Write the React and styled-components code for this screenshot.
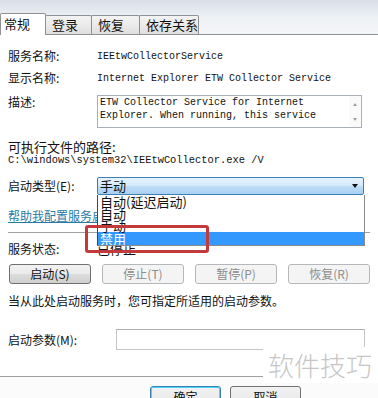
import React from "react";
import styled, { createGlobalStyle } from "styled-components";

const Global = createGlobalStyle`
  html, body { margin: 0; padding: 0; background: #fff; }
  body { font-family: "Noto Sans CJK SC", "Noto Sans", sans-serif; color: #111; }
`;

const Frame = styled.div`
  position: relative;
  width: 378px;
  height: 398px;
  overflow: hidden;
  background: #fff;
  display: flex;
  flex-direction: column;
  font-family: "Noto Sans CJK SC", "Noto Sans", sans-serif;
`;

const Header = styled.div`
  height: 34px;
  display: flex;
  flex-direction: column;
  justify-content: flex-end;
  background: linear-gradient(#d8dfe7 0%, #e4e9ef 30%, #eef1f4 50%, #f4f5f7 100%);
  border-bottom: 1px solid #8e9297;
`;

const TabBar = styled.div`
  display: flex;
  align-items: flex-end;
  height: 22px;
`;

const Tab = styled.div`
  box-sizing: border-box;
  width: ${(p) => p.$w}px;
  height: ${(p) => (p.$active ? 22 : 19)}px;
  margin-bottom: ${(p) => (p.$active ? -1 : 0)}px;
  margin-left: -1px;
  padding-left: ${(p) => (p.$active ? 3 : 6)}px;
  border: 1px solid #8e9297;
  border-bottom: none;
  border-radius: 2px 2px 0 0;
  background: ${(p) =>
    p.$active ? "#fff" : "linear-gradient(#f3f3f3 0%, #ebebeb 50%, #dedede 100%)"};
  font-size: 13px;
  line-height: ${(p) => (p.$active ? 19 : 17)}px;
  color: #111;
  white-space: nowrap;
  position: relative;
  z-index: ${(p) => (p.$active ? 1 : 0)};
`;

const Panel = styled.div`
  padding: 0 8px;
  display: flex;
  flex-direction: column;
`;

const Row = styled.div`
  display: flex;
  align-items: ${(p) => p.$align || "center"};
  height: ${(p) => p.$h}px;
  margin-top: ${(p) => p.$mt}px;
  position: relative;
`;

const Label = styled.div`
  width: ${(p) => p.$w || 89}px;
  flex-shrink: 0;
  font-size: ${(p) => p.$fs || 12}px;
  line-height: ${(p) => p.$lh || 14}px;
  color: #111;
  white-space: nowrap;
`;

const Mono = styled.div`
  font-family: "Liberation Mono", "DejaVu Sans Mono", monospace;
  font-size: ${(p) => p.$fs || 10}px;
  line-height: ${(p) => p.$lh || 13}px;
  color: #111;
  white-space: nowrap;
`;

const DescBox = styled.div`
  box-sizing: border-box;
  width: 265px;
  height: 33px;
  border: 1px solid #a9afb6;
  display: flex;
  background: #fff;
`;

const DescText = styled.div`
  flex: 1;
  padding: 0 2px;
  font-family: "Liberation Mono", "DejaVu Sans Mono", monospace;
  font-size: 10px;
  line-height: 13px;
  color: #111;
  white-space: nowrap;
  overflow: hidden;
`;

const ScrollCol = styled.div`
  width: 12px;
  display: flex;
  flex-direction: column;
  justify-content: space-between;
  align-items: center;
  padding: 7px 0 6px;
  background: #fafafa;
`;

const Arrow = styled.div`
  width: 0;
  height: 0;
  border-left: 2.5px solid transparent;
  border-right: 2.5px solid transparent;
  ${(p) =>
    p.$down
      ? "border-top: 3px solid #a0a0a0;"
      : "border-bottom: 3px solid #a0a0a0;"}
`;

const ComboWrap = styled.div`
  position: relative;
  width: 267px;
  height: 18px;
`;

const Combo = styled.div`
  box-sizing: border-box;
  height: 18px;
  border: 1px solid #3c7fb1;
  border-radius: 2px;
  background: linear-gradient(#e8f3fc 0%, #d6eafb 45%, #bcdcf7 55%, #a9d0f3 100%);
  display: flex;
  align-items: center;
  justify-content: space-between;
  padding: 0 5px 0 2px;
  font-size: 13px;
  line-height: 16px;
  color: #111;
`;

const DropTri = styled.div`
  width: 0;
  height: 0;
  border-left: 3.5px solid transparent;
  border-right: 3.5px solid transparent;
  border-top: 4px solid #111;
`;

const DropList = styled.div`
  position: absolute;
  top: 18px;
  left: 0;
  box-sizing: border-box;
  width: 268px;
  height: 51px;
  background: #fff;
  border: 1px solid #8a8a8a;
  border-top: none;
  border-left-color: #444;
  padding-top: 1px;
  z-index: 5;
  overflow: hidden;
`;

const Item = styled.div`
  font-size: 13px;
  line-height: ${(p) => (p.$sel ? 13 : 12)}px;
  height: ${(p) => (p.$sel ? 13 : 12)}px;
  padding-left: 2px;
  color: ${(p) => (p.$sel ? "#fff" : "#111")};
  background: ${(p) => (p.$sel ? "#3399ff" : "transparent")};
  white-space: nowrap;
`;

const Link = styled.a`
  font-size: 12px;
  line-height: 14px;
  color: #2a7aa5;
  text-decoration: underline;
  white-space: nowrap;
`;

const Sep = styled.div`
  height: 1px;
  margin-top: ${(p) => p.$mt}px;
  background: #a0a0a0;
`;

const Value = styled.div`
  font-size: 13px;
  line-height: 14px;
  color: #111;
`;

const BtnRow = styled.div`
  display: flex;
  justify-content: space-between;
  height: 20px;
  margin-top: ${(p) => p.$mt}px;
  padding-left: 1px;
`;

const Button = styled.div`
  box-sizing: border-box;
  width: 82px;
  height: 20px;
  border: 1px solid ${(p) => (p.$disabled ? "#b5b8bb" : "#707070")};
  border-radius: 3px;
  background: ${(p) =>
    p.$disabled
      ? "#f4f4f4"
      : "linear-gradient(#f2f2f2 0%, #ebebeb 50%, #dddddd 51%, #cfcfcf 100%)"};
  color: ${(p) => (p.$disabled ? "#8c8c8c" : "#111")};
  font-size: 12px;
  line-height: 18px;
  text-align: center;
  white-space: nowrap;
`;

const Info = styled.div`
  margin-top: ${(p) => p.$mt}px;
  font-size: 12px;
  line-height: 14px;
  height: 14px;
  color: #111;
  white-space: nowrap;
`;

const Input = styled.div`
  box-sizing: border-box;
  width: 249px;
  height: 21px;
  border: 1px solid #c2c6cb;
  border-top-color: #abadb3;
  background: #fff;
`;

const Footer = styled.div`
  margin-top: auto;
  height: 21px;
  border-top: 1px solid #a0a0a0;
  display: flex;
  gap: 9px;
  padding: 9px 0 0 150px;
  box-sizing: border-box;
  height: 22px;
  background: #fbfbfb;
`;

const DlgButton = styled.div`
  box-sizing: border-box;
  width: 71px;
  height: 24px;
  flex-shrink: 0;
  border: 1px solid ${(p) => (p.$def ? "#3c7fb1" : "#707070")};
  border-radius: 3px;
  box-shadow: ${(p) => (p.$def ? "inset 0 0 0 1px #48d4fb" : "none")};
  background: linear-gradient(#f2f2f2 0%, #ebebeb 50%, #dddddd 51%, #cfcfcf 100%);
  font-size: 12px;
  line-height: 20px;
  text-align: center;
  color: #111;
`;

const RedBox = styled.div`
  position: absolute;
  left: 85px;
  top: 225px;
  width: 124px;
  height: 28px;
  box-sizing: border-box;
  border: 3px solid #c33a3c;
  border-radius: 3px;
  z-index: 10;
`;

const Watermark = styled.div`
  position: absolute;
  left: 263px;
  top: 347px;
  width: 115px;
  height: 36px;
  background: #fff;
  font-size: 26px;
  line-height: 36px;
  color: #c6c6c6;
  font-weight: 300;
  padding-left: 5px;
  box-sizing: border-box;
  white-space: nowrap;
  z-index: 10;
`;

export default function App() {
  return (
    <>
      <Global />
      <Frame>
        <Header>
          <TabBar>
            <Tab $w={46} $active style={{ marginLeft: 0 }}>常规</Tab>
            <Tab $w={47}>登录</Tab>
            <Tab $w={49}>恢复</Tab>
            <Tab $w={60}>依存关系</Tab>
          </TabBar>
        </Header>
        <Panel>
          <Row $h={18} $mt={12}>
            <Label>服务名称:</Label>
            <Mono>IEEtwCollectorService</Mono>
          </Row>
          <Row $h={18} $mt={4}>
            <Label>显示名称:</Label>
            <Mono>Internet Explorer ETW Collector Service</Mono>
          </Row>
          <Row $h={33} $mt={8} $align="flex-start">
            <Label style={{ marginTop: 0 }}>描述:</Label>
            <DescBox>
              <DescText>
                ETW Collector Service for Internet
                <br />
                Explorer. When running, this service
              </DescText>
              <ScrollCol>
                <Arrow />
                <Arrow $down />
              </ScrollCol>
            </DescBox>
          </Row>
          <Row $h={14} $mt={12}>
            <Label $fs={13} $w={200}>可执行文件的路径:</Label>
          </Row>
          <Row $h={12} $mt={0}>
            <Mono $fs={10.4} $lh={12}>C:\windows\system32\IEEtwCollector.exe /V</Mono>
          </Row>
          <Row $h={18} $mt={11}>
            <Label>启动类型(E):</Label>
            <ComboWrap>
              <Combo>
                <span>手动</span>
                <DropTri />
              </Combo>
              <DropList>
                <Item>自动(延迟启动)</Item>
                <Item>自动</Item>
                <Item>手动</Item>
                <Item $sel>禁用</Item>
              </DropList>
            </ComboWrap>
          </Row>
          <Row $h={14} $mt={14}>
            <Link>帮助我配置服务启动选项。</Link>
          </Row>
          <Sep $mt={9} />
          <Row $h={14} $mt={9}>
            <Label>服务状态:</Label>
            <Value>已停止</Value>
          </Row>
          <BtnRow $mt={8}>
            <Button>启动(S)</Button>
            <Button $disabled>停止(T)</Button>
            <Button $disabled>暂停(P)</Button>
            <Button $disabled>恢复(R)</Button>
          </BtnRow>
          <Info $mt={10}>当从此处启动服务时，您可指定所适用的启动参数。</Info>
          <Row $h={21} $mt={21}>
            <Label $w={108}>启动参数(M):</Label>
            <Input />
          </Row>
        </Panel>
        <Footer>
          <DlgButton $def>确定</DlgButton>
          <DlgButton>取消</DlgButton>
        </Footer>
        <RedBox />
        <Watermark>软件技巧</Watermark>
      </Frame>
    </>
  );
}
